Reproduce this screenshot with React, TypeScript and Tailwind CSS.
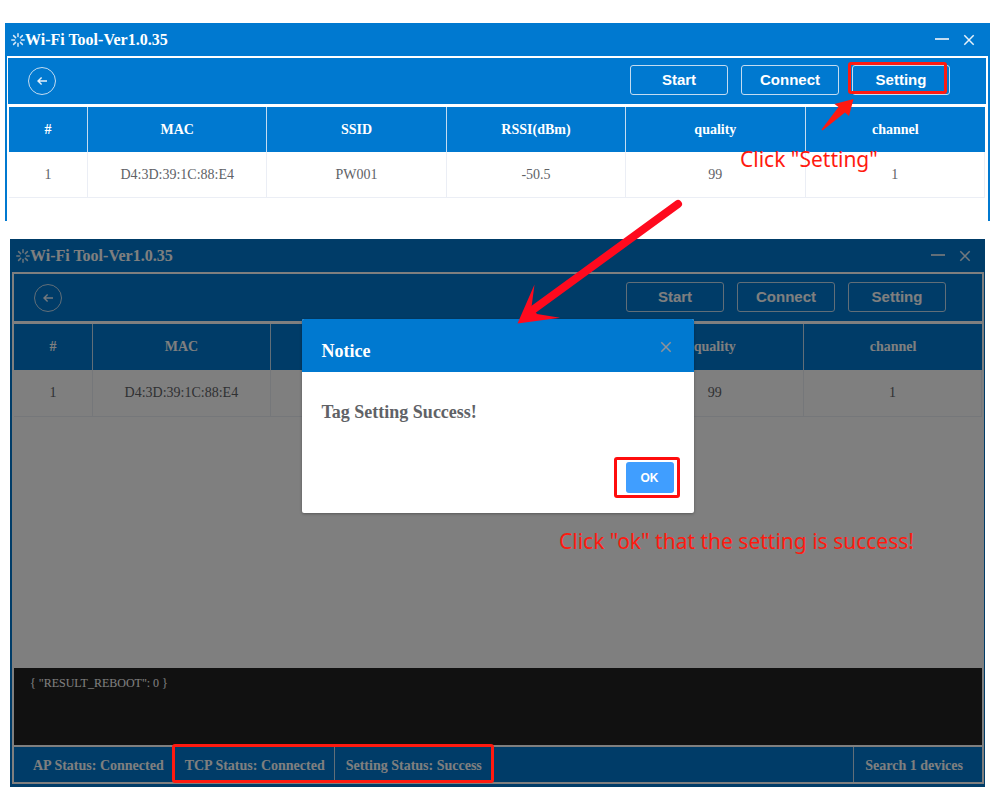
import type { ReactNode } from "react";
import { clsx } from "clsx";

type Device = {
  mac: string;
  ssid: string;
  rssi: string;
  quality: number;
  channel: number;
};

const DEVICES: Device[] = [
  { mac: "D4:3D:39:1C:88:E4", ssid: "PW001", rssi: "-50.5", quality: 99, channel: 1 },
];

const COLUMNS = ["MAC", "SSID", "RSSI(dBm)", "quality", "channel"];

const SERIF = "font-['Liberation_Serif',serif]";
const SANS = "font-['Liberation_Sans',sans-serif]";
const NOTE = "font-['Noto_Sans',sans-serif] text-[21px] leading-7 whitespace-nowrap text-[#ff1a10]";

function SpinnerIcon() {
  return (
    <svg className="h-[14px] w-[14px]" viewBox="0 0 14 14" stroke="#d6e8f7" strokeWidth="1.5" strokeLinecap="round">
      <path d="M7 .8v2.800M7 10.4v2.800M.8 7h2.800M10.4 7h2.800M2.6 2.6l2 2M9.4 9.4l2 2M2.6 11.4l2-2M9.4 4.600l2-2" />
    </svg>
  );
}

function CloseIcon({ color = "#e6f1fa" }: { color?: string }) {
  return (
    <svg className="h-[12px] w-[12px]" viewBox="0 0 12 12" stroke={color} strokeWidth="1.5">
      <path d="M1.300 1.300l9.400 9.400M10.700 1.300L1.300 10.700" />
    </svg>
  );
}

function TitleBar() {
  return (
    <header className="flex h-[33px] items-center bg-[#0079d0] pr-[13px] pl-1 text-white">
      <SpinnerIcon />
      <h1 className="text-base leading-5 font-bold">Wi-Fi Tool-Ver1.0.35</h1>
      <div className="ml-auto flex items-center gap-[14px]">
        <button type="button" aria-label="Minimize">
          <svg className="h-[12px] w-[14px]" viewBox="0 0 14 12" stroke="#c3dcf1" strokeWidth="2">
            <path d="M0 5h14" />
          </svg>
        </button>
        <button type="button" aria-label="Close">
          <CloseIcon />
        </button>
      </div>
    </header>
  );
}

function ToolButton({ children }: { children: ReactNode }) {
  return (
    <button
      type="button"
      className={clsx(
        SANS,
        "h-[30px] w-[98px] rounded-[3px] border border-[#c3dcf1] text-[15px] leading-5 font-bold text-white",
      )}
    >
      {children}
    </button>
  );
}

function Toolbar({ marked = false }: { marked?: boolean }) {
  return (
    <div className={clsx("flex items-center bg-[#0079d0] pr-9 pl-5", marked ? "h-[46px]" : "h-[47px]")}>
      <button
        type="button"
        aria-label="Back"
        className="flex h-7 w-7 items-center justify-center rounded-full border border-[#c3dcf1]"
      >
        <svg className="h-[10px] w-[10px]" viewBox="0 0 10 10" fill="none" stroke="#e6f1fa" strokeWidth="1.4">
          <path d="M10 5H1M4.6 1.4L1 5l3.6 3.6" />
        </svg>
      </button>
      <div className="ml-auto flex gap-[13px] pb-[2px]">
        <ToolButton>Start</ToolButton>
        <ToolButton>Connect</ToolButton>
        <div className="relative">
          <ToolButton>Setting</ToolButton>
          {marked && <SettingNote />}
        </div>
      </div>
    </div>
  );
}

function SettingNote() {
  return (
    <>
      <span className="absolute -top-[3px] -left-1 h-8 w-[99px] rounded-[3px] border-3 border-[#ff1a10]" />
      <svg className="absolute top-[33px] -left-8 h-9 w-9" viewBox="0 0 36 36" fill="#ff1a10">
        <path d="M33.500 1L14.500 6l4 3L1.500 31.500 2.500 32.500 25 14.500l4 3.500z" />
      </svg>
      <p className={clsx(NOTE, "absolute top-20 -left-[112px]")}>Click "Setting"</p>
    </>
  );
}

function DeviceTable({ tall = false }: { tall?: boolean }) {
  return (
    <table className="w-full table-fixed border-separate border-spacing-0 text-center text-sm leading-5">
      <thead>
        <tr className={clsx("bg-[#0079d0] text-white", tall ? "h-[46px]" : "h-[45px]")}>
          <th className="w-[79px] border-r border-[#c3dcf1] font-bold">#</th>
          {COLUMNS.map((name) => (
            <th key={name} className="border-r border-[#c3dcf1] font-bold last:border-r-0">
              {name}
            </th>
          ))}
        </tr>
      </thead>
      <tbody>
        {DEVICES.map((d, i) => (
          <tr key={d.mac} className={clsx("text-[#606266]", tall ? "h-[47px]" : "h-[46px]")}>
            {[i + 1, d.mac, d.ssid, d.rssi, d.quality, d.channel].map((value, col) => (
              <td key={col} className="border-r border-b border-[#ebeef5]">
                {value}
              </td>
            ))}
          </tr>
        ))}
      </tbody>
    </table>
  );
}

function StatusBar() {
  return (
    <footer className="flex h-[35px] bg-[#0079d0] text-sm leading-[38px] font-bold text-white">
      <p className="border-r border-[#c3dcf1] pr-[9px] pl-[19px]">AP Status: Connected</p>
      <div className="relative flex">
        <p className="border-r border-[#c3dcf1] pr-[9px] pl-[11px]">TCP Status: Connected</p>
        <p className="border-r border-[#c3dcf1] pr-[9px] pl-[11px]">Setting Status: Success</p>
        <span className="absolute -inset-x-[2px] -top-[3px] -bottom-px z-20 rounded-[3px] border-3 border-[#ff1a10]" />
      </div>
      <p className="ml-auto border-l border-[#c3dcf1] pr-[19px] pl-[11px]">Search 1 devices</p>
    </footer>
  );
}

function NoticeDialog() {
  return (
    <div
      role="dialog"
      aria-labelledby="notice-title"
      className="w-[392px] rounded-[2px] bg-white shadow-[0_1px_3px_rgba(0,0,0,0.3)]"
    >
      <div className="flex h-[53px] justify-between rounded-t-[2px] bg-[#0079d0] px-5 pt-[22px]">
        <h2 id="notice-title" className="text-lg leading-5 font-bold text-white">
          Notice
        </h2>
        <button type="button" aria-label="Close notice" className="h-[12px] pr-[2px]">
          <CloseIcon color="#909399" />
        </button>
      </div>
      <p className="px-5 pt-[30px] text-lg leading-5 font-bold text-[#606266]">Tag Setting Success!</p>
      <div className="flex justify-end pt-10 pr-5 pb-5">
        <div className="relative">
          <button
            type="button"
            className={clsx(SANS, "block h-[31px] w-12 rounded-[3px] bg-[#409eff] text-xs font-bold text-white")}
          >
            OK
          </button>
          <span className="absolute -top-[5px] -right-[6px] -bottom-[5px] -left-3 rounded-[3px] border-3 border-[#ff0d0d]" />
        </div>
      </div>
      <p className={clsx(NOTE, "absolute top-[288px] left-[549px]")}>
        Click "ok" that the setting is success!
      </p>
    </div>
  );
}

function FlowArrow() {
  return (
    <svg className="pointer-events-none absolute top-[196px] left-[514px] z-30 h-[132px] w-[172px]" viewBox="514 196 172 132">
      <path d="M678 204L534 309" stroke="#ff0a1e" strokeWidth="8" strokeLinecap="round" />
      <path d="M517.500 323.500L534.500 284.500 531.500 307 537 314 560 317.700z" fill="#ff0a1e" />
    </svg>
  );
}

export default function App() {
  return (
    <main className={clsx(SERIF, "relative min-h-screen bg-white pt-[23px]")}>
      <section className="mr-[10px] ml-[5px] border-x-2 border-[#0079d0]">
        <TitleBar />
        <div className="border-t-2 border-r-2 border-l border-white">
          <Toolbar marked />
          <div className="min-h-[117px] border-x border-t-3 border-white">
            <DeviceTable />
          </div>
        </div>
      </section>

      <section className="relative mt-[18px] mr-[15px] ml-[10px] border-r border-b-3 border-l-2 border-[#0079d0]">
        <TitleBar />
        <div className="border-2 border-white">
          <Toolbar />
          <div className="min-h-[347px] border-t-3 border-white">
            <DeviceTable tall />
          </div>
          <pre
            className={clsx(SERIF, "h-[77px] bg-[#222] px-4 pt-[5px] text-xs leading-5 text-white")}
          >{`{ "RESULT_REBOOT": 0 }`}</pre>
          <div className="border-t-2 border-white">
            <StatusBar />
          </div>
        </div>
        <div className="absolute top-0 -right-px -bottom-[3px] -left-[2px] z-10 flex items-start justify-center bg-black/50 pt-20">
          <NoticeDialog />
        </div>
      </section>

      <FlowArrow />
    </main>
  );
}
